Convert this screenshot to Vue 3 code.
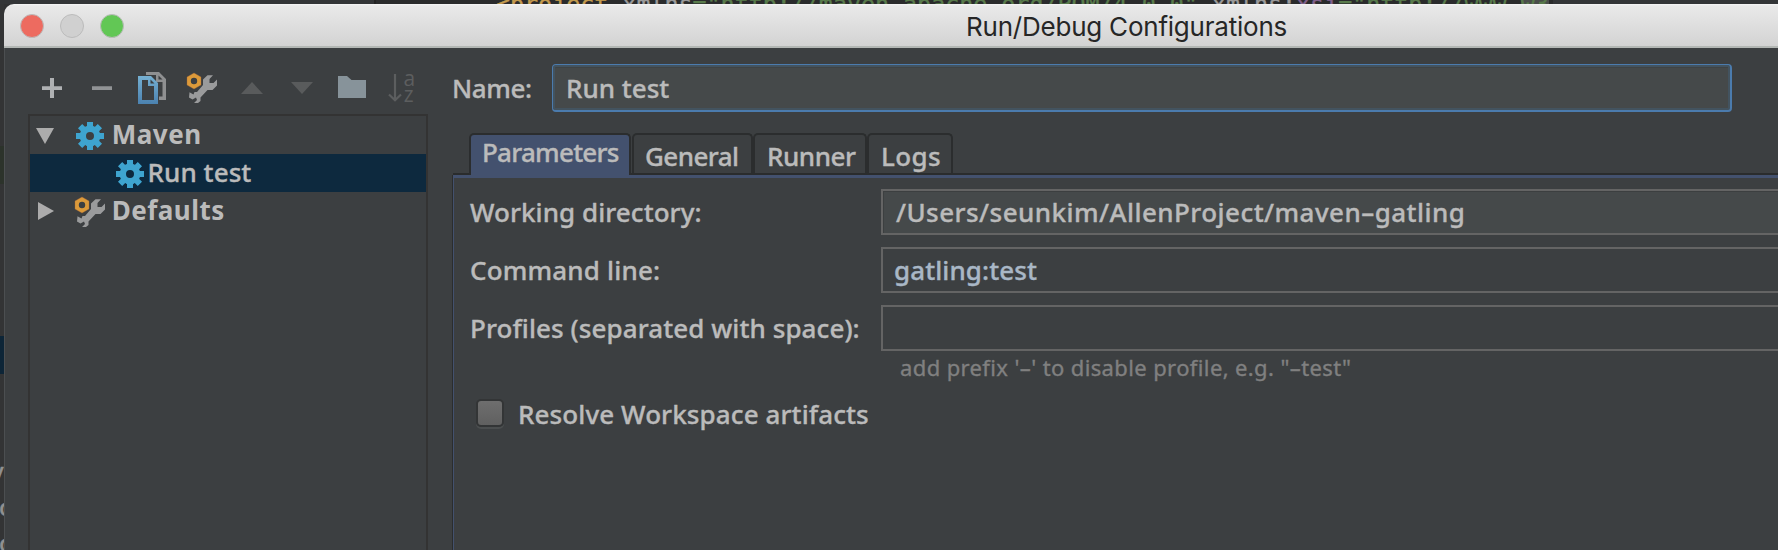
<script setup>
const tools = ['add', 'remove', 'copy', 'edit', 'up', 'down', 'folder', 'sort']
const tabs = [
  { id: 'parameters', label: 'Parameters', active: true },
  { id: 'general', label: 'General' },
  { id: 'runner', label: 'Runner' },
  { id: 'logs', label: 'Logs' },
]
const gearAngles = [0, 45, 90, 135]
</script>

<template>
  <div class="screen">
    <div class="code"><span class="tag">&lt;project</span> <span class="attr">xmlns</span><span class="str">="http://maven.apache.org/POM/4.0.0"</span> <span class="attr">xmlns:</span><span class="ns">xsi</span><span class="str">="http://www.<span class="mark">w3</span></span></div>
    <div class="behind">
      <i class="green"></i><i class="navy"></i>
      <span class="tail">y</span><span>o</span><span>o</span>
    </div>

    <div class="dialog">
      <header class="titlebar">
        <div class="lights"><i class="red"></i><i class="grey"></i><i class="lime"></i></div>
        <h1>Run/Debug Configurations</h1>
      </header>

      <div class="body">
        <aside class="side">
          <div class="toolbar">
            <svg v-for="t in tools" :key="t" viewBox="0 0 32 32" width="32" height="32">
              <path v-if="t === 'add'" d="M14 6h4v8.2h8V18h-8v8h-4v-8H6v-3.8h8z" fill="#afb1b3" />
              <path v-else-if="t === 'remove'" d="M6 14.2h20V18H6z" fill="#919395" />
              <g v-else-if="t === 'copy'">
                <path d="M10 0H23L30 7V28H23V24.5H26.5V10H20V3H10Z M22.5 3.5V7.5H26.5Z" fill="#8f9091" fill-rule="evenodd" />
                <defs><linearGradient id="sheet" x1="0" y1="0" x2="0" y2="1"><stop offset="0" stop-color="#75b0d2" /><stop offset="1" stop-color="#4b82b0" /></linearGradient></defs>
                <path d="M2 4H15L22 11V32H2Z M6 8V28H18V14H12V8Z M14.5 7.5V11.5H18.5Z" fill="url(#sheet)" fill-rule="evenodd" />
              </g>
              <g v-else-if="t === 'edit'">
                <path d="M27 3.2H21.5L17 7.5V13L11 20H8.5L7.5 22.5L3.5 20.2L3 25.5L6.5 27.5L10 25.5L11 28L8 31H12L14.5 29V25.5L21.5 18H26.5L31 13.5V7.5L27.5 11H23.5V7Z" fill="#9a9b9c" />
                <path d="M8 1L15 5V13L8 17L1 13V5Z M8 5.8A3.2 3.2 0 1 0 8 12.2A3.2 3.2 0 1 0 8 5.8Z" fill="#dc9a3a" fill-rule="evenodd" />
                <path d="M8 1L15 5V13L8 17L1 13V5Z" fill="none" stroke="#a9683a" stroke-opacity=".35" />
              </g>
              <path v-else-if="t === 'up'" d="M5 22L16 10L27 22Z" fill="#595b5c" />
              <path v-else-if="t === 'down'" d="M5 10L16 22L27 10Z" fill="#595b5c" />
              <path v-else-if="t === 'folder'" d="M2 4H11L15.5 8H30V26H2Z" fill="#87939a" />
              <g v-else>
                <path d="M9 2V28M3 22.5L9 28.3L15 22.5" fill="none" stroke="#5c5e5f" stroke-width="2.2" />
                <text x="17.6" y="14" class="sort">a</text>
                <text x="17.8" y="29.6" class="sort">z</text>
              </g>
            </svg>
          </div>

          <div class="tree">
            <div class="row">
              <svg class="arrow" width="18" height="18" viewBox="0 0 18 18"><path d="M0 1H18L9 17Z" fill="#acacac" /></svg>
              <svg class="gear" width="28" height="28" viewBox="-14 -14 28 28">
                <circle r="7.2" fill="none" stroke="#3ea4cf" stroke-width="6.4" />
                <path v-for="a in gearAngles" :key="a" :transform="`rotate(${a})`" d="M-3-14H3V-8H-3ZM-3 14H3V8H-3Z" fill="#3ea4cf" />
              </svg>
              <b class="maven">Maven</b>
            </div>
            <div class="row child">
              <svg class="gear" width="28" height="28" viewBox="-14 -14 28 28">
                <circle r="7.2" fill="none" stroke="#3ea4cf" stroke-width="6.4" />
                <path v-for="a in gearAngles" :key="a" :transform="`rotate(${a})`" d="M-3-14H3V-8H-3ZM-3 14H3V8H-3Z" fill="#3ea4cf" />
              </svg>
              <span>Run test</span>
            </div>
            <div class="row">
              <svg class="arrow" width="18" height="18" viewBox="0 0 18 18"><path d="M2 0V18L18 9Z" fill="#acacac" /></svg>
              <svg class="wrench" viewBox="0 0 32 32" width="32" height="32">
                <path d="M27 3.2H21.5L17 7.5V13L11 20H8.5L7.5 22.5L3.5 20.2L3 25.5L6.5 27.5L10 25.5L11 28L8 31H12L14.5 29V25.5L21.5 18H26.5L31 13.5V7.5L27.5 11H23.5V7Z" fill="#9a9b9c" />
                <path d="M8 1L15 5V13L8 17L1 13V5Z M8 5.8A3.2 3.2 0 1 0 8 12.2A3.2 3.2 0 1 0 8 5.8Z" fill="#dc9a3a" fill-rule="evenodd" />
                <path d="M8 1L15 5V13L8 17L1 13V5Z" fill="none" stroke="#a9683a" stroke-opacity=".35" />
              </svg>
              <b class="defaults">Defaults</b>
            </div>
          </div>
        </aside>

        <main class="main">
          <div class="name-row">
            <label>Name:</label>
            <div class="name-field">Run test</div>
          </div>

          <nav class="tabs">
            <div v-for="t in tabs" :key="t.id" class="tab" :class="[t.id, { active: t.active }]"><span>{{ t.label }}</span></div>
          </nav>

          <section class="panel">
            <div class="field"><label class="wd">Working directory:</label><div class="input filled">/Users/seunkim/AllenProject/maven–gatling</div></div>
            <div class="field"><label class="cl">Command line:</label><div class="input command">gatling:test</div></div>
            <div class="field"><label class="pf">Profiles (separated with space):</label><div class="input"></div></div>
            <p class="hint">add prefix '–' to disable profile, e.g. "–test"</p>
            <div class="check"><i></i><span>Resolve Workspace artifacts</span></div>
          </section>
        </main>
      </div>
    </div>
  </div>
</template>

<style>
body { background: #333537; }
</style>

<style scoped>
.screen {
  width: 1778px; height: 550px; overflow: hidden;
  display: grid; grid-template: 4px 546px / 4px 1774px;
  background: #303132;
  font: 500 26px/36px "Noto Sans", "Open Sans", sans-serif;
  color: #bbbbbb; white-space: nowrap;
  -webkit-text-stroke: .35px;
}
.code {
  grid-column: 1 / 3; height: 4px; overflow: hidden; box-sizing: border-box;
  padding-left: 496px;
  font: 23.32px/8px "DejaVu Sans Mono", monospace; white-space: pre;
  background: linear-gradient(90deg, #333537 0 374px, #232323 374px 376px, #2a2b2c 376px 1553px, #333537 1553px);
}
.code .tag { color: #c39a4e; }
.code .attr { color: #9a9a9a; }
.code .str { color: #587a4b; }
.code .ns { color: #80608b; }
.code .mark { background: #4a4d4a; }
.behind { position: relative; overflow: hidden; background: #333435; display: flex; flex-direction: column; padding-top: 449px; box-sizing: border-box; color: #909090; }
.behind span { height: 37px; margin-left: -1px; font-size: 24px; }
.behind .tail { margin-left: -9px; }
.behind i { position: absolute; left: 0; width: 4px; }
.behind .green { top: 142px; height: 38px; background: #2c332b; }
.behind .navy { top: 332px; height: 38px; background: #0d2537; }

.dialog { background: #3c3f41; border-radius: 10px 0 0 0; overflow: hidden; }
.titlebar {
  height: 44px; box-sizing: border-box; display: flex; padding: 10px 0 0 16px;
  background: linear-gradient(#f6f6f6 0, #e9e9e9 2px, #d3d3d3 42px); border-bottom: 2px solid #b3b7b4;
}
.lights { display: flex; gap: 16px; width: 946px; }
.lights i { width: 24px; height: 24px; box-sizing: border-box; border-radius: 50%; border: 1px solid; }
.red { background: #ed6b60; border-color: #d2544b; }
.grey { background: #d0d0d0; border-color: #acacac; }
.lime { background: #62c755; border-color: #4ba73f; }
h1 { margin: -5px 0 0; font: 400 26px/36px Inter, sans-serif; letter-spacing: -.22px; color: #262626; -webkit-text-stroke: 0; }

.body { display: flex; height: 502px; box-shadow: inset 1px 0 #4c4f51; }
.side { flex: none; width: 424px; padding: 24px 0 0 24px; box-sizing: border-box; }
.toolbar { display: flex; gap: 18px; padding: 0 0 10px 8px; }
.toolbar svg { display: block; flex: none; }
.sort { font: 400 21px "Open Sans", sans-serif; fill: #5c5e5f; -webkit-text-stroke: 0; }
.tree { width: 400px; height: 460px; box-sizing: border-box; border: 2px solid #333333; }
.row { height: 38px; display: flex; align-items: flex-start; padding-left: 6px; }
.arrow { margin-top: 11px; }
.row:last-child .arrow { margin: 10px 0 0; }
.gear { margin: 6px 0 0 22px; }
.wrench { margin: 4px 0 0 20px; }
.row b { font-weight: 700; -webkit-text-stroke: 0; }
.maven { margin-left: 7.7px; letter-spacing: .51px; }
.defaults { margin-left: 5.7px; letter-spacing: .48px; }
.child { background: #0d293e; padding-left: 64px; }
.child span { margin-left: 3.5px; letter-spacing: .08px; }

.main { flex: none; width: 1400px; padding: 16px 0 0 24px; }
.name-row { display: flex; height: 69px; align-items: flex-start; }
.name-row label { width: 100px; padding-top: 6px; letter-spacing: -.4px; box-sizing: border-box; }
.name-field {
  width: 1180px; height: 48px; box-sizing: border-box; padding: 4px 0 0 12px;
  border: solid #4b7bad; border-width: 1px 2px 2px 1px; border-radius: 4px;
  background: #45494a; box-shadow: inset 0 0 0 2px #43535f, inset 0 3px #3f4344; padding: 5px 0 0 13px;
  outline: 0;
}
.tabs { display: flex; height: 40px; padding-left: 17px; }
.tab { box-sizing: border-box; height: 40px; border: 2px solid #2b2d2e; border-bottom-width: 0; border-radius: 5px 5px 0 0; padding-top: 2px; }
.tab:not(.active) span { position: relative; top: 1px; }
.tab span { display: block; }
.parameters { width: 162px; background: #43516e; height: 42px; position: relative; z-index: 1; padding: 0 0 0 11px; letter-spacing: -.75px; }
.parameters span { margin-top: -1px; }
.general { width: 121px; margin-left: 1px; padding-left: 11px; letter-spacing: -.55px; }
.runner { width: 114px; padding-left: 12px; letter-spacing: -.45px; }
.logs { width: 86px; padding-left: 12px; letter-spacing: .37px; }
.panel { border: 1px solid #43516e; border-top: 3px solid #43516e; box-shadow: 0 -2px #2a2c2d, -1px 0 #2b2d2e; margin: 2px 0 0 1px; height: 400px; padding: 11px 0 0 16px; box-sizing: border-box; }
.field { display: flex; height: 46px; margin-bottom: 12px; }
.field label { flex: none; width: 411px; padding-top: 5px; box-sizing: border-box; }
.wd { letter-spacing: .06px; } .cl { letter-spacing: .17px; } .pf { letter-spacing: .08px; }
.input { flex: none; width: 1000px; border: 2px solid #646464; height: 46px; box-sizing: border-box; padding: 3px 0 0 11px; }
.filled { background: #45494a; box-shadow: inset 1px 1px #3c3f40; letter-spacing: .45px; padding-left: 13px; }
.command { color: #a9b7c6; letter-spacing: .09px; }
.hint { margin: -14px 0 0 430px; font: 400 22px/36px "Noto Sans", sans-serif; letter-spacing: .38px; color: #808080; }
.check { display: flex; align-items: flex-start; margin: 11px 0 0 6px; }
.check i { width: 28px; height: 28px; margin-top: 3px; box-sizing: border-box; border: 2px solid #333536; border-radius: 5px; background: linear-gradient(#6e6e6e, #606060); box-shadow: 0 2px #4b4e4f; }
.check span { margin-left: 14px; letter-spacing: .1px; }
</style>
